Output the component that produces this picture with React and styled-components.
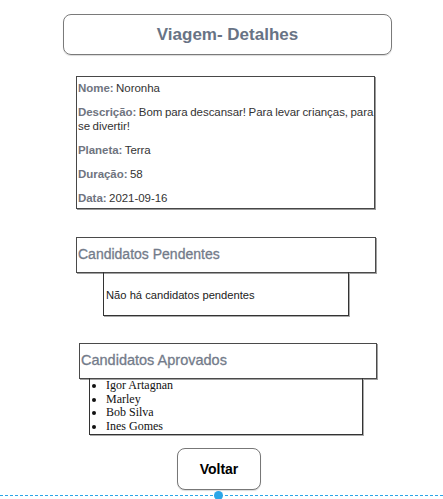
import React from "react";
import styled, { createGlobalStyle } from "styled-components";

const Global = createGlobalStyle`
  html, body { margin: 0; padding: 0; background: #fff; }
  body { font-family: "Liberation Sans", Arial, sans-serif; }
`;

const Page = styled.div`
  position: relative;
  width: 443px;
  height: 499px;
  display: flex;
  flex-direction: column;
  align-items: flex-start;
  padding-top: 14px;
  box-sizing: border-box;
`;

const TitleBox = styled.div`
  margin-left: 63px;
  width: 329px;
  height: 41px;
  box-sizing: border-box;
  border: 1px solid #7a7a7a;
  border-radius: 8px;
  box-shadow: 0 1px 1px rgba(0,0,0,0.15);
  display: flex;
  align-items: center;
  justify-content: center;
`;

const Title = styled.h1`
  margin: 0;
  font-size: 17px;
  font-weight: bold;
  color: #687385;
`;

const Details = styled.div`
  margin-top: 21px;
  margin-left: 76px;
  width: 299px;
  height: 133px;
  box-sizing: border-box;
  border: 1px solid #474747;
  box-shadow: 1px 1px 0 #9a9a9a;
  padding: 5px 0 0 1px;
`;

const Line = styled.p`
  margin: 0 0 11px;
  font-size: 11.5px;
  line-height: 13.3px;
  letter-spacing: -0.05px;
  word-spacing: -0.6px;
  color: #333;
  &:last-child { margin-bottom: 0; }
`;

const Label = styled.b`
  color: #6f7480;
`;

const SectionHeader = styled.div`
  margin-top: ${p => p.$top}px;
  margin-left: ${p => p.$left}px;
  width: ${p => p.$width}px;
  height: 36px;
  box-sizing: border-box;
  border: 1px solid #4a4a4a;
  box-shadow: 1px 1px 0 #a0a0a0;
  display: flex;
  align-items: center;
  padding: 0 0 3px 1px;
`;

const SectionTitle = styled.h2`
  margin: 0;
  font-size: ${p => p.$size}px;
  font-weight: normal;
  -webkit-text-stroke: 0.3px #737b8a;
  color: #737b8a;
`;

const EmptyBox = styled.div`
  margin-left: 103px;
  margin-top: -1px;
  width: 246px;
  height: 44px;
  box-sizing: border-box;
  border: 1px solid #333;
  border-top: none;
  box-shadow: 1px 1px 0 #aaa;
  padding: 16px 0 0 2px;
  font-size: 11.2px;
  line-height: 14px;
  color: #222;
`;

const List = styled.ul`
  margin: -1px 0 0 89px;
  width: 274px;
  height: 57px;
  box-sizing: border-box;
  border: 1px solid #333;
  border-top: none;
  box-shadow: 1px 1px 0 #aaa;
  padding: 1px 0 0 16px;
  font-family: "Liberation Serif", "Times New Roman", serif;
  font-size: 12px;
  line-height: 13.7px;
  color: #111;
`;

const Button = styled.button`
  margin-top: 13px;
  margin-left: 177px;
  width: 84px;
  height: 42px;
  box-sizing: border-box;
  border: 1px solid #777;
  border-radius: 8px;
  background: #fff;
  box-shadow: 0 1px 1px rgba(0,0,0,0.15);
  font-family: "Liberation Sans", Arial, sans-serif;
  font-size: 14px;
  font-weight: bold;
  color: #000;
  cursor: pointer;
`;

const Guide = styled.div`
  margin-top: 5px;
  width: 443px;
  border-top: 1px dashed #2aa6e8;
  position: relative;
`;

const Dot = styled.span`
  position: absolute;
  left: 214px;
  top: -5px;
  width: 9px;
  height: 9px;
  border-radius: 50%;
  background: #2aa6e8;
`;

export default function App() {
  const approved = ["Igor Artagnan", "Marley", "Bob Silva", "Ines Gomes"];
  return (
    <>
      <Global />
      <Page>
        <TitleBox>
          <Title>Viagem- Detalhes</Title>
        </TitleBox>
        <Details>
          <Line><Label>Nome:</Label> Noronha</Line>
          <Line><Label>Descrição:</Label> Bom para descansar! Para levar crianças, para se divertir!</Line>
          <Line><Label>Planeta:</Label> Terra</Line>
          <Line><Label>Duração:</Label> 58</Line>
          <Line><Label>Data:</Label> 2021-09-16</Line>
        </Details>
        <SectionHeader $top={28} $left={76} $width={300}>
          <SectionTitle $size={14}>Candidatos Pendentes</SectionTitle>
        </SectionHeader>
        <EmptyBox>Não há candidatos pendentes</EmptyBox>
        <SectionHeader $top={27} $left={79} $width={298}>
          <SectionTitle $size={14.5}>Candidatos Aprovados</SectionTitle>
        </SectionHeader>
        <List>
          {approved.map(n => <li key={n}>{n}</li>)}
        </List>
        <Button>Voltar</Button>
        <Guide><Dot /></Guide>
      </Page>
    </>
  );
}
